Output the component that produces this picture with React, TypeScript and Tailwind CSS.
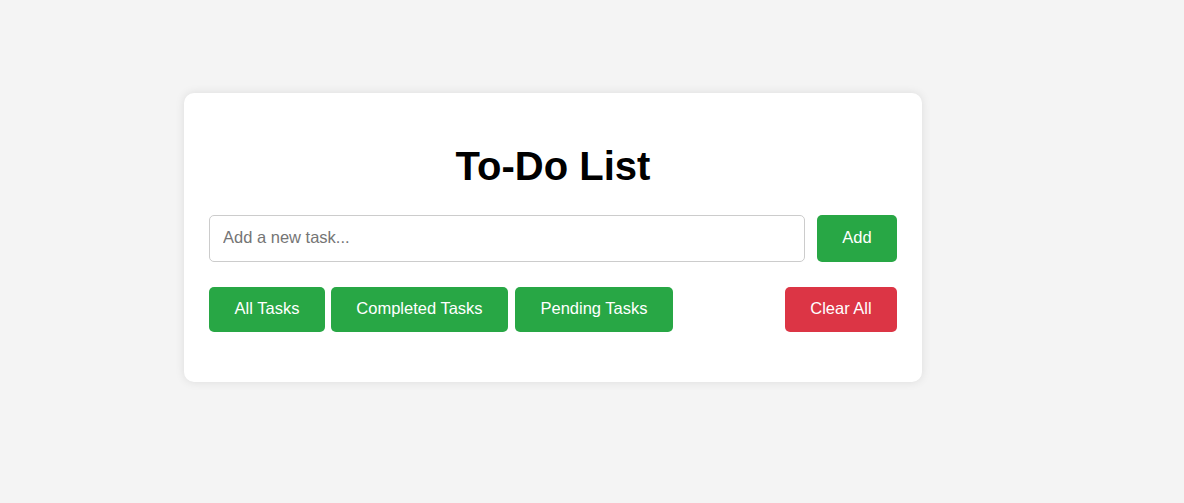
import { useState } from "react";

type Filter = "all" | "completed" | "pending";

export default function App() {
  const [text, setText] = useState<string>("");
  const [filter, setFilter] = useState<Filter>("all");

  const btn =
    "h-[45px] rounded-[5px] bg-[#28a745] pb-[2px] text-white text-[16.5px] leading-none flex items-center justify-center";

  return (
    <div
      className="min-h-[503px] w-full bg-[#f4f4f4] pt-[93px]"
      style={{ fontFamily: '"Liberation Sans", Arial, sans-serif' }}
    >
      <div className="ml-[184px] w-[738px] rounded-[10px] bg-white px-[25px] pt-[50px] pb-[50px] shadow-[0_0_10px_rgba(0,0,0,0.1)]">
        <h1 className="mb-[26px] text-center text-[40px] font-bold leading-[46px] text-black">
          To-Do List
        </h1>

        <div className="flex h-[47px] gap-[12px]">
          <input
            value={text}
            onChange={(e) => setText(e.target.value)}
            placeholder="Add a new task..."
            className="h-full flex-1 rounded-[5px] border border-[#cccccc] px-[13px] pb-[2px] text-[16.5px] text-[#333] outline-none placeholder:text-[#757575]"
          />
          <button className="flex h-full w-[80px] items-center justify-center rounded-[5px] bg-[#28a745] pb-[2px] text-[16.5px] leading-none text-white">
            Add
          </button>
        </div>

        <div className="mt-[25px] flex items-center">
          <button
            onClick={() => setFilter("all")}
            className={btn + " w-[116px]"}
          >
            All Tasks
          </button>
          <button
            onClick={() => setFilter("completed")}
            className={btn + " ml-[6px] w-[177px]"}
          >
            Completed Tasks
          </button>
          <button
            onClick={() => setFilter("pending")}
            className={btn + " ml-[7px] w-[158px]"}
          >
            Pending Tasks
          </button>
          <button className="ml-auto flex h-[45px] w-[112px] items-center justify-center rounded-[5px] bg-[#dc3545] pb-[2px] text-[16.5px] leading-none text-white">
            Clear All
          </button>
        </div>
        {filter === null && <div />}
      </div>
    </div>
  );
}
